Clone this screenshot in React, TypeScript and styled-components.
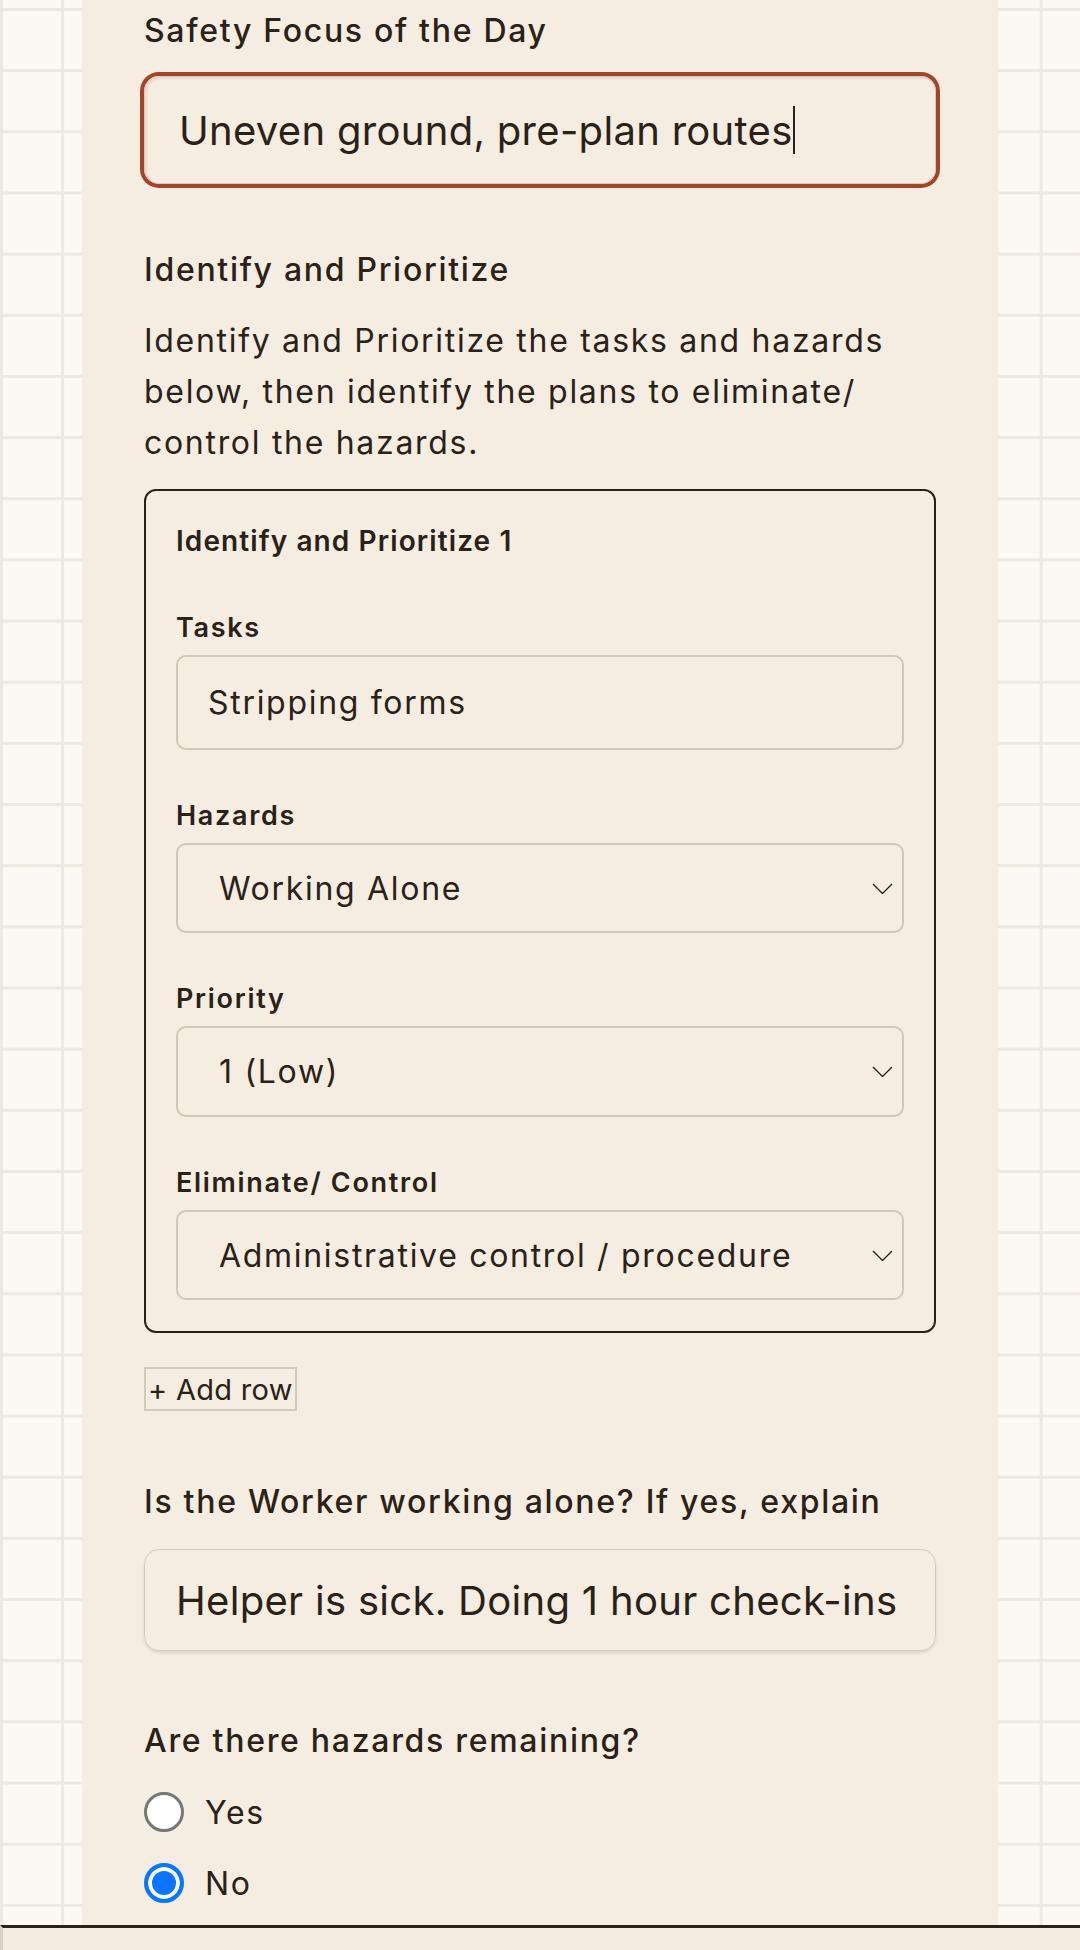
import React, { FC } from 'react';
import styled, { createGlobalStyle } from 'styled-components';

const GlobalStyle = createGlobalStyle`
  html, body {
    margin: 0;
    padding: 0;
  }

  body {
    background-color: #fcf8f3;
    background-image:
      linear-gradient(to right, #eee8e1 3px, transparent 3px),
      linear-gradient(to bottom, #eee8e1 3px, transparent 3px);
    background-size: 61.17px 61.17px;
    background-position: 0 8px;
    font-family: Inter, 'Noto Sans', sans-serif;
    letter-spacing: 1.7px;
    color: #2a2119;
  }
`;

const Sheet = styled.main`
  box-sizing: border-box;
  width: 916px;
  min-height: 100vh;
  margin: 0 auto;
  padding: 7px 62px 120px;
  background: #f5ede1;
  display: flex;
  flex-direction: column;
`;

const Label = styled.div<{ $gap?: number }>`
  margin-top: ${(p) => p.$gap ?? 0}px;
  font-size: 32px;
  font-weight: 500;
  line-height: 48px;
`;

const Help = styled.p`
  margin: 21px 0 0;
  font-size: 32px;
  line-height: 51px;
`;

const TextField = styled.div<{ $focused?: boolean; $gap: number }>`
  box-sizing: border-box;
  display: flex;
  align-items: center;
  margin-top: ${(p) => p.$gap}px;
  height: ${(p) => (p.$focused ? 108 : 102)}px;
  padding: 0 ${(p) => (p.$focused ? 34 : 31)}px;
  border: 1.5px solid #d3cabd;
  border-radius: 15px;
  font-size: 40px;
  letter-spacing: 0.3px;
  white-space: nowrap;
  overflow: hidden;
  box-shadow: ${(p) =>
    p.$focused
      ? 'inset 2px 2px 2px rgba(0, 0, 0, 0.08), 0 0 0 4px #a2452a'
      : '0 2px 3px rgba(60, 40, 20, 0.12)'};
`;

const Caret = styled.span`
  display: inline-block;
  width: 2px;
  height: 48px;
  background: #2a2119;
`;

const Card = styled.section`
  margin-top: 21px;
  padding: 29px 30px 31px;
  border: 2px solid #2a2119;
  border-radius: 12px;
`;

const CardTitle = styled.div`
  font-size: 28px;
  font-weight: 600;
  line-height: 42px;
  letter-spacing: 1.1px;
`;

const Group = styled.div`
  margin-top: 46px;
`;

const FieldLabel = styled.div`
  font-size: 27px;
  font-weight: 600;
  line-height: 40px;
`;

const Control = styled.div<{ $height: number; $indent: number }>`
  box-sizing: border-box;
  display: flex;
  align-items: center;
  justify-content: space-between;
  margin-top: 7px;
  height: ${(p) => p.$height}px;
  padding: 0 9px 0 ${(p) => p.$indent}px;
  border: 2px solid #d0c7b9;
  border-radius: 10px;
  font-size: 32px;
`;

const Chevron = styled.svg`
  width: 21px;
  height: 11px;
  flex: none;
`;

const AddRow = styled.button`
  align-self: flex-start;
  margin-top: 34px;
  height: 44px;
  padding: 0 2px;
  border: 2px solid #d2cabd;
  background: transparent;
  color: #2a2119;
  font-family: inherit;
  font-size: 29px;
  letter-spacing: 0.3px;
  line-height: 1;
`;

const Options = styled.div`
  display: flex;
  flex-direction: column;
  gap: 23px;
  margin-top: 23px;
`;

const Option = styled.label`
  display: flex;
  align-items: center;
  gap: 21px;
  height: 48px;
  font-size: 32px;
`;

const Radio = styled.span<{ $checked?: boolean }>`
  box-sizing: border-box;
  width: 40px;
  height: 40px;
  border-radius: 50%;
  flex: none;
  border: ${(p) => (p.$checked ? '4px solid #0a75ff' : '3px solid #777777')};
  background: ${(p) => (p.$checked ? '#0a75ff' : '#ffffff')};
  box-shadow: ${(p) => (p.$checked ? 'inset 0 0 0 4px #ffffff' : 'none')};
`;

const Footer = styled.footer`
  position: fixed;
  left: 0;
  right: 0;
  bottom: 0;
  height: 22px;
  border-top: 3px solid #2a2119;
  border-left: 3px solid #d9d1c5;
  background: #f4ece0;
`;

const Select: FC<{ value: string; height: number }> = ({ value, height }) => (
  <Control $height={height} $indent={41}>
    <span>{value}</span>
    <Chevron viewBox="0 0 21 11">
      <path d="M1 1l9.5 9.5L20 1" fill="none" stroke="#2a2119" strokeWidth="1.4" />
    </Chevron>
  </Control>
);

const App: FC = () => (
  <>
    <GlobalStyle />
    <Sheet>
      <Label>Safety Focus of the Day</Label>
      <TextField $focused $gap={21}>
        Uneven ground, pre-plan routes
        <Caret />
      </TextField>

      <Label $gap={62}>Identify and Prioritize</Label>
      <Help>
        Identify and Prioritize the tasks and hazards below, then identify the plans to
        eliminate/ control the hazards.
      </Help>

      <Card>
        <CardTitle>Identify and Prioritize 1</CardTitle>

        <Group>
          <FieldLabel>Tasks</FieldLabel>
          <Control $height={95} $indent={30}>
            Stripping forms
          </Control>
        </Group>

        <Group>
          <FieldLabel>Hazards</FieldLabel>
          <Select value="Working Alone" height={90} />
        </Group>

        <Group>
          <FieldLabel>Priority</FieldLabel>
          <Select value="1 (Low)" height={91} />
        </Group>

        <Group>
          <FieldLabel>Eliminate/ Control</FieldLabel>
          <Select value="Administrative control / procedure" height={90} />
        </Group>
      </Card>

      <AddRow>+ Add row</AddRow>

      <Label $gap={67}>Is the Worker working alone? If yes, explain</Label>
      <TextField $gap={23}>Helper is sick. Doing 1 hour check-ins</TextField>

      <Label $gap={66}>Are there hazards remaining?</Label>
      <Options>
        <Option>
          <Radio />
          Yes
        </Option>
        <Option>
          <Radio $checked />
          No
        </Option>
      </Options>
    </Sheet>
    <Footer />
  </>
);

export default App;
